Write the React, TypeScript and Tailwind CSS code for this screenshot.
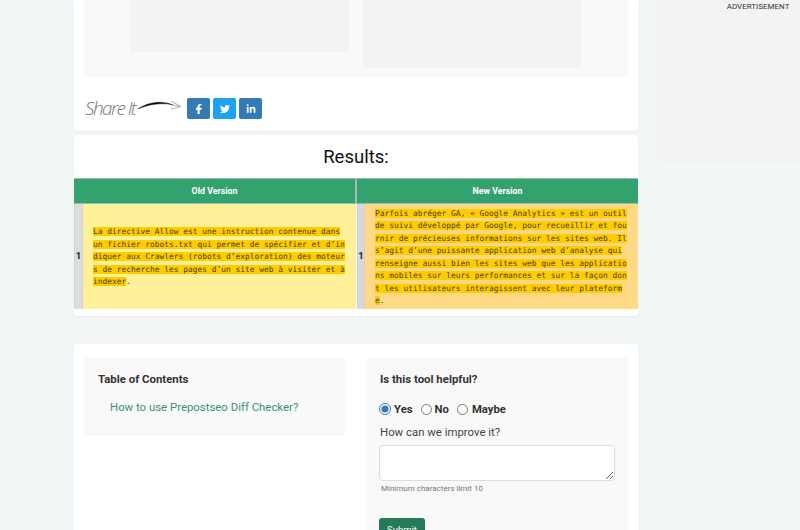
import React from "react";

const roboto = { fontFamily: "Roboto, sans-serif" };

const oldText =
  "La directive Allow est une instruction contenue dans un fichier robots.txt qui permet de spécifier et d’indiquer aux Crawlers (robots d’exploration) des moteurs de recherche les pages d’un site web à visiter et à indexer";
const newText =
  "Parfois abréger GA, « Google Analytics » est un outil de suivi développé par Google, pour recueillir et fournir de précieuses informations sur les sites web. Il s’agit d’une puissante application web d’analyse qui renseigne aussi bien les sites web que les applications mobiles sur leurs performances et sur la façon dont les utilisateurs interagissent avec leur plateforme";

function Diff({ text, bg, num, w }: { text: string; bg: string; num: string; w: string }) {
  return (
    <div className={`flex h-full shrink-0 ${w}`}>
      <div className={`${num} shrink-0 flex items-center justify-center text-[9.500px] font-bold text-[#222] border-x border-dotted border-[#c8c8c8]`}>1</div>
      <div className={`${bg} flex-1 flex items-center pl-[10px] pt-[2px]`}>
        <p className="w-[254px] font-['DejaVu_Sans_Mono',monospace] text-[7.900px] leading-[12.500px] break-all text-[#4a4000]">
          <span className="bg-[#ffcc00]">{text}</span>.
        </p>
      </div>
    </div>
  );
}

export default function App() {
  return (
    <div className="w-[800px] h-[530px] overflow-hidden flex items-start bg-[#f3f6f7]" style={roboto}>
      <div className="w-[564px] h-[530px] ml-[74px] shrink-0 flex flex-col">
        <section className="h-[131px] bg-white rounded-b-[3px] px-[10px] shadow-[0_1px_2px_rgba(0,0,0,0.04)] shrink-0">
          <div className="h-[77px] bg-[#f9f9f9] rounded-b-[3px] flex items-start pl-[46px] gap-[14px]">
            <div className="w-[219px] h-[52px] bg-[#f3f3f3]" />
            <div className="w-[218px] h-[68px] bg-[#f3f3f3]" />
          </div>
          <div className="flex items-center h-[21px] mt-[21px]">
            <span className="font-['Open_Sans',sans-serif] italic font-light text-[19px] leading-[21px] text-[#777] w-[53px] whitespace-nowrap pl-[1px] tracking-[-1.600px]">Share It</span>
            <svg width="46" height="14" viewBox="0 0 46 14" className="-mt-[5px] shrink-0">
              <path d="M1 10C10 3 26 1 36 6C27 3.500 12 5 1 10Z" fill="#111" stroke="#111" strokeWidth="0.4" />
              <path d="M34 2L44 7.500L34 10M36 6L43 7.500" fill="none" stroke="#999" strokeWidth="0.8" />
            </svg>
            <div className="flex gap-[3px] ml-[4px]">
              <span className="w-[23px] h-[21px] rounded-[2px] bg-[#337ab7] text-white flex items-center justify-center">
                <svg width="10" height="10" viewBox="0 0 320 512" fill="currentColor"><path d="M80 299v213h116V299h87l17-109H196v-71c0-30 15-59 62-59h47V4s-43-4-84-4C135 0 80 52 80 146v44H0v109z" /></svg>
              </span>
              <span className="w-[23px] h-[21px] rounded-[2px] bg-[#1da1f2] text-white flex items-center justify-center">
                <svg width="10" height="10" viewBox="0 0 512 512" fill="currentColor"><path d="M459 152c.3 4.500.3 9 .3 13.600 0 139-106 299-299 299-59 0-115-17-161-47 8 1 16 1.300 25 1.300 49 0 94-17 130-45-46-1-85-31-98-73 6 1 13 1.600 20 1.600 10 0 19-1 28-4-48-10-84-52-84-103v-1c14 8 30 13 47 13-28-19-47-51-47-87 0-19 5-37 14-53 52 64 129 105 216 110-2-8-3-16-3-24 0-58 47-105 105-105 30 0 58 13 77 33 24-5 47-14 67-26-8 25-25 46-46 59 21-2 41-8 60-16-14 21-32 39-52 54z" /></svg>
              </span>
              <span className="w-[23px] h-[21px] rounded-[2px] bg-[#337ab7] text-white flex items-center justify-center">
                <svg width="10" height="10" viewBox="0 0 448 512" fill="currentColor"><path d="M100 448H7V149h93zM53 108C24 108 0 83 0 54a54 54 0 01107 0c0 29-24 54-54 54zm395 340h-93V302c0-35-1-79-48-79-48 0-56 38-56 77v148h-93V149h89v41h1c12-24 43-48 88-48 94 0 112 62 112 142z" /></svg>
              </span>
            </div>
          </div>
        </section>

        <section className="h-[181px] mt-[4px] bg-white rounded-[3px] shrink-0 shadow-[0_1px_2px_rgba(0,0,0,0.04)] flex flex-col">
          <h2 className="h-[43px] pt-[3px] flex items-center justify-center text-[18.500px] text-[#111] shrink-0">Results:</h2>
          <div className="h-[26px] flex shrink-0 border-y border-[#8fc0a8]">
            <div className="w-[281px] pt-[1px] bg-[#34a26f] text-white text-[8.800px] font-bold flex items-center justify-center">Old Version</div>
            <div className="w-[2px] bg-[#a9b8b0]" />
            <div className="flex-1 pt-[1px] bg-[#34a26f] text-white text-[8.800px] font-bold flex items-center justify-center">New Version</div>
          </div>
          <div className="h-[105px] flex shrink-0 gap-[1px]">
            <Diff text={oldText} bg="bg-[#fff09a]" num="w-[9px] bg-[#dddddd]" w="w-[282px]" />
            <Diff text={newText} bg="bg-[#ffd986]" num="w-[8px] bg-[#d8d8d8]" w="w-[281px]" />
          </div>
        </section>

        <section className="mt-[28px] flex-1 bg-white rounded-t-[3px] px-[10px] pt-[13px] flex gap-[20px] items-start">
          <div className="w-[262px] h-[79px] bg-[#f9f9f9] rounded-[4px] px-[14px] pt-[14px]">
            <h3 className="text-[11.400px] leading-[16px] font-bold text-[#333]">Table of Contents</h3>
            <a className="block ml-[12px] mt-[12px] text-[11.400px] leading-[16px] text-[#3f8f78]">How to use Prepostseo Diff Checker?</a>
          </div>
          <div className="w-[262px] h-[300px] bg-[#f9f9f9] rounded-[4px] pl-[13px] pt-[14px]">
            <h3 className="ml-[1px] text-[11.400px] leading-[16px] font-bold text-[#333]">Is this tool helpful?</h3>
            <div className="flex items-center h-[16px] mt-[15px] text-[11.300px] font-bold text-[#333]">
              <input type="radio" name="h" defaultChecked className="w-[12px] h-[12px] m-0 -mt-[2px] accent-[#337ab7]" />
              <span className="ml-[3px] mr-[8px]">Yes</span>
              <input type="radio" name="h" className="w-[11px] h-[11px] m-0 -mt-[2px]" />
              <span className="ml-[3px] mr-[8px]">No</span>
              <input type="radio" name="h" className="w-[11px] h-[11px] m-0 -mt-[2px]" />
              <span className="ml-[4px]">Maybe</span>
            </div>
            <p className="ml-[1px] mt-[6px] text-[11.400px] leading-[16px] text-[#444]">How can we improve it?</p>
            <textarea className="block mt-[5px] w-[236px] h-[36px] bg-white border border-[#ddd] rounded-[4px]" />
            <p className="mt-[2px] ml-[2px] text-[8px] leading-[12px] text-[#777]">Minimum characters limit 10</p>
            <button className="block mt-[23px] w-[46px] h-[24px] bg-[#257a59] text-white text-[9.500px] rounded-[3px]">Submit</button>
          </div>
        </section>
      </div>
      <div className="ml-[20px] w-[142px] h-[163px] bg-[#f3f3f3]">
        <p className="text-[8px] leading-[12px] mt-[1px] text-right pr-[10.500px] text-[#333]">ADVERTISEMENT</p>
      </div>
    </div>
  );
}
